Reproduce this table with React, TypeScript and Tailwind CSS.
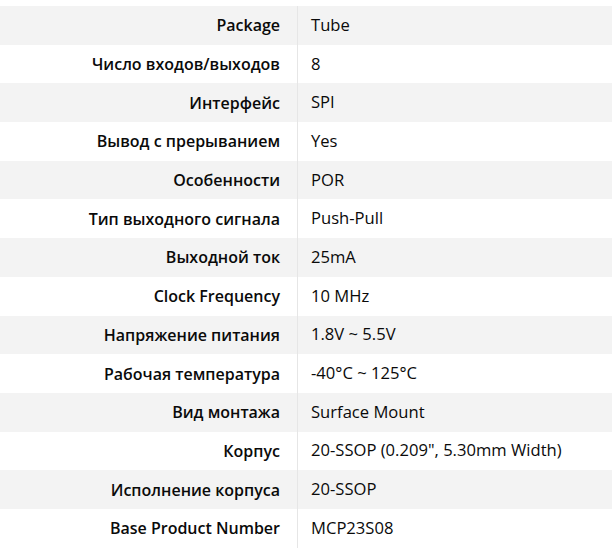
import React from "react";

const rows: [string, string][] = [
  ["Package", "Tube"],
  ["Число входов/выходов", "8"],
  ["Интерфейс", "SPI"],
  ["Вывод с прерыванием", "Yes"],
  ["Особенности", "POR"],
  ["Тип выходного сигнала", "Push-Pull"],
  ["Выходной ток", "25mA"],
  ["Clock Frequency", "10 MHz"],
  ["Напряжение питания", "1.8V ~ 5.5V"],
  ["Рабочая температура", "-40°C ~ 125°C"],
  ["Вид монтажа", "Surface Mount"],
  ["Корпус", "20-SSOP (0.209\", 5.30mm Width)"],
  ["Исполнение корпуса", "20-SSOP"],
  ["Base Product Number", "MCP23S08"],
];

export default function App() {
  return (
    <div
      className="w-[612px] h-[555px] bg-white pt-[6px] text-[#0a0a0a]"
      style={{ fontFamily: '"Open Sans", "Noto Sans", sans-serif' }}
    >
      {rows.map(([k, v], i) => (
        <div
          key={k}
          className={`grid grid-cols-[298px_1fr] h-[38.7px] ${i % 2 === 0 ? "bg-[#f3f3f3]" : "bg-white"}`}
        >
          <div className="flex items-center justify-end pr-[17px] text-[16px] font-semibold border-r border-[#e6e6e6] whitespace-nowrap">
            {k}
          </div>
          <div className="flex items-center pl-[13px] text-[16.6px] whitespace-nowrap">{v}</div>
        </div>
      ))}
    </div>
  );
}
